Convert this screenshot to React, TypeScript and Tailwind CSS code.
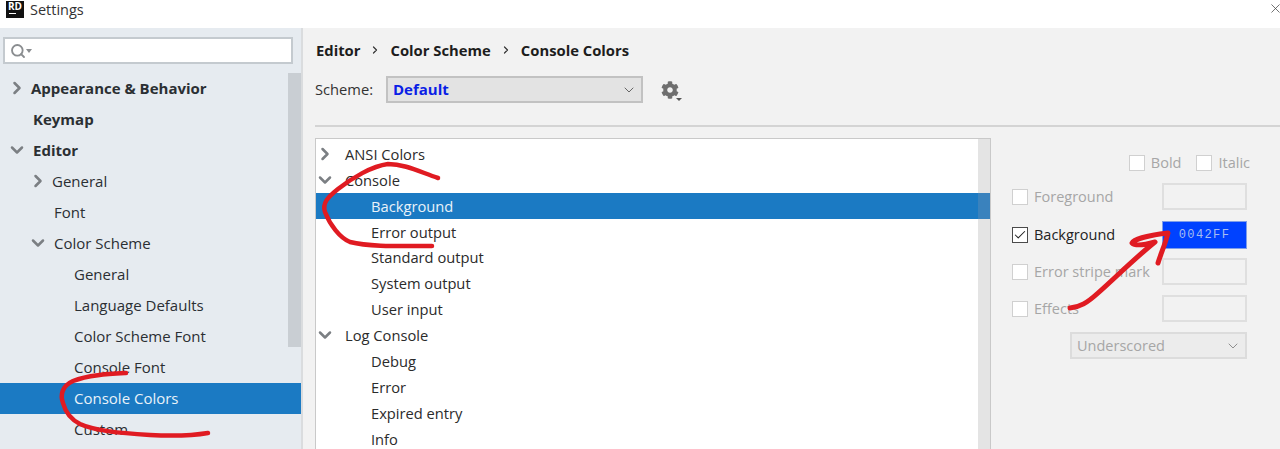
import { ChevronRight, ChevronDown, Search, Check, X } from "lucide-react";
import { FaCog } from "react-icons/fa";

const FONT = "font-['Open_Sans','Noto_Sans',sans-serif]";

type SideItem = { label: string; indent: string; arrow?: "r" | "d"; bold?: boolean; sel?: boolean };
const side: SideItem[] = [
  { label: "Appearance & Behavior", indent: "pl-[31px]", arrow: "r", bold: true },
  { label: "Keymap", indent: "pl-[33px]", bold: true },
  { label: "Editor", indent: "pl-[33px]", arrow: "d", bold: true },
  { label: "General", indent: "pl-[52px]", arrow: "r" },
  { label: "Font", indent: "pl-[54px]" },
  { label: "Color Scheme", indent: "pl-[54px]", arrow: "d" },
  { label: "General", indent: "pl-[74px]" },
  { label: "Language Defaults", indent: "pl-[74px]" },
  { label: "Color Scheme Font", indent: "pl-[74px]" },
  { label: "Console Font", indent: "pl-[74px]" },
  { label: "Console Colors", indent: "pl-[74px]", sel: true },
  { label: "Custom", indent: "pl-[74px]" },
];

type TreeItem = { label: string; arrow?: "r" | "d"; child?: boolean; sel?: boolean };
const tree: TreeItem[] = [
  { label: "ANSI Colors", arrow: "r" },
  { label: "Console", arrow: "d" },
  { label: "Background", child: true, sel: true },
  { label: "Error output", child: true },
  { label: "Standard output", child: true },
  { label: "System output", child: true },
  { label: "User input", child: true },
  { label: "Log Console", arrow: "d" },
  { label: "Debug", child: true },
  { label: "Error", child: true },
  { label: "Expired entry", child: true },
  { label: "Info", child: true },
];

function Arrow({ dir, className }: { dir: "r" | "d"; className: string }) {
  const Icon = dir === "r" ? ChevronRight : ChevronDown;
  return <Icon size={20} strokeWidth={3} className={`absolute text-[#7b7f83] ${className}`} />;
}

function Box({ checked }: { checked?: boolean }) {
  return (
    <span
      className={`flex h-4 w-4 shrink-0 items-center justify-center border bg-white ${
        checked ? "border-[#4a4a4a]" : "border-[#d0d0d0]"
      }`}
    >
      {checked && <Check size={14} strokeWidth={1.8} className="text-[#222222]" />}
    </span>
  );
}

function AttrRow({ label, checked, children, className }: { label: string; checked?: boolean; children?: React.ReactNode; className: string }) {
  return (
    <div className={`flex h-[27px] items-center ${className}`}>
      <Box checked={checked} />
      <span className={`ml-[6px] whitespace-nowrap text-[14.5px] ${checked ? "text-[#222222]" : "text-[#a6a6a6]"}`}>{label}</span>
      <div className="ml-auto">{children}</div>
    </div>
  );
}

const EmptyField = () => <div className="h-[27px] w-[85px] border-2 border-[#dfdfdf] bg-[#f2f2f2]" />;

export default function App() {
  return (
    <div className={`relative flex h-[449px] w-[1280px] flex-col overflow-hidden bg-white ${FONT}`}>
      <header className="flex h-[28px] shrink-0 items-start bg-white pl-[6px]">
        <div className="mt-[1px] flex h-[17px] w-[18px] flex-col items-start bg-[#111111] pl-[2px]">
          <span className="text-[10px] font-bold leading-[11px] text-white">RD</span>
          <span className="ml-[1px] mt-[1px] h-[1px] w-[7px] bg-white" />
        </div>
        <span className="ml-[6px] text-[14.5px] leading-[20px] text-[#333333]">Settings</span>
        <X size={15} strokeWidth={1.2} className="ml-auto mr-[-3px] mt-[1px] text-[#444444]" />
      </header>

      <div className="flex min-h-0 flex-1">
        <aside className="relative w-[301px] shrink-0 overflow-hidden bg-[#e6ebf0]">
          <div className="flex h-[27px] ml-[3px] mt-[9px] w-[290px] items-center border-2 border-[#c4cacf] bg-white pl-[5px]">
            <Search size={16} strokeWidth={2.8} className="text-[#8a8d90]" />
            <span className="h-0 w-0 border-x-[3px] border-t-[4px] border-x-transparent border-t-[#8a8d90]" />
          </div>
          <div className="absolute right-0 top-[45px] h-[274px] w-[13px] bg-[#c9ced3]" />
          <div className="relative mt-[9px]">
            {side.map((it) => (
              <div
                key={it.label + it.indent}
                className={`relative flex h-[31px] items-center whitespace-nowrap pb-[1px] text-[15px] ${it.indent} ${
                  it.sel ? "bg-[#1b7ac3] text-[#e9f2f9]" : "text-[#2b2f33]"
                } ${it.bold ? "font-bold text-[#1d2125]" : ""}`}
              >
                {it.arrow && <Arrow dir={it.arrow} className={it.indent === "pl-[31px]" || it.indent === "pl-[33px]" ? "left-[7px]" : "left-[28px]"} />}
                {it.label}
              </div>
            ))}
          </div>
        </aside>

        <main className="flex min-w-0 flex-1 flex-col border-l-2 border-[#dadcde] bg-[#f2f2f2]">
          <div className="flex h-[48px] shrink-0 items-center pb-[4px] pl-[13px] text-[14.8px] font-bold text-[#1d1d1d]">
            <span>Editor</span>
            <ChevronRight size={12} strokeWidth={2.4} className="mx-[9px] text-[#333333]" />
            <span>Color Scheme</span>
            <ChevronRight size={12} strokeWidth={2.4} className="mx-[9px] text-[#333333]" />
            <span>Console Colors</span>
          </div>
          <div className="flex h-[27px] shrink-0 items-center pl-[12px]">
            <span className="w-[71px] text-[14.7px] text-[#333333]">Scheme:</span>
            <div className="flex h-[27px] w-[257px] items-center justify-between border-2 border-[#c2c2c2] bg-[#e3e3e3] pl-[5px] pr-[4px]">
              <span className="text-[15px] font-bold text-[#0a1ee6]">Default</span>
              <ChevronDown size={16} strokeWidth={1.5} className="text-[#666666]" />
            </div>
            <span className="relative ml-[18px]">
              <FaCog size={18} className="text-[#6f6f6f]" />
              <span className="absolute bottom-[-2px] right-[-3px] h-0 w-0 border-x-[3px] border-t-[3px] border-x-transparent border-t-[#555555]" />
            </span>
          </div>
          <div className="ml-[12px] mt-[22px] h-[2px] shrink-0 bg-[#d4d4d4]" />
          <div className="flex min-h-0 flex-1 pl-[12px] pt-[11px]">
            <div className="relative flex h-[340px] w-[676px] shrink-0 border border-[#c9c9c9] bg-white">
              <div className="min-w-0 flex-1 pt-[2px]">
                {tree.map((it) => (
                  <div
                    key={it.label}
                    className={`relative flex h-[25.9px] items-center whitespace-nowrap text-[14.7px] ${
                      it.child ? "pl-[55px]" : "pl-[29px]"
                    } ${it.sel ? "bg-[#1b7ac3] text-[#e9f2f9]" : "text-[#2b2b2b]"}`}
                  >
                    {it.arrow && <Arrow dir={it.arrow} className="left-[-1px]" />}
                    {it.label}
                  </div>
                ))}
              </div>
              <div className="relative w-[12px] shrink-0 bg-[#e4e4e4]">
                <div className="absolute left-0 top-[54px] h-[26px] w-full bg-[#3a82bd]" />
              </div>
            </div>

            <div className="flex w-[256px] shrink-0 flex-col pl-[21px] pt-[17px]">
              <div className="flex h-4 items-center justify-end gap-[6px] text-[14.5px] text-[#a6a6a6]">
                <Box />
                <span className="mr-[9px]">Bold</span>
                <Box />
                <span className="mr-[-3px]">Italic</span>
              </div>
              <AttrRow label="Foreground" className="mt-[12px]"><EmptyField /></AttrRow>
              <AttrRow label="Background" checked className="mt-[11px]">
                <div className="flex h-[28px] w-[85px] items-center justify-center border border-[#7f9ee8] bg-[#0042ff] font-['Liberation_Mono',monospace] text-[12px] tracking-[1.4px] text-[#a8bcf0]">
                  0042FF
                </div>
              </AttrRow>
              <AttrRow label="Error stripe mark" className="mt-[10px]"><EmptyField /></AttrRow>
              <AttrRow label="Effects" className="mt-[10px]"><EmptyField /></AttrRow>
              <div className="ml-[58px] mt-[10px] flex h-[27px] items-center justify-between border-2 border-[#dcdcdc] bg-[#ececec] pl-[5px] pr-[4px] pt-[1px] text-[14.5px] text-[#a6a6a6]">
                <span>Underscored</span>
                <ChevronDown size={16} strokeWidth={1.5} className="text-[#8e8e8e]" />
              </div>
            </div>
          </div>
        </main>
      </div>

      <svg className="pointer-events-none absolute left-0 top-0" width="1280" height="449" fill="none" stroke="#e01b22" strokeLinecap="round" strokeLinejoin="round" strokeWidth="4.5">
        <path d="M126 373 C108 374 88 375 73 381 C62 386 60 395 63 403 C66 414 72 420 80 424 C95 431 120 433 150 435 C170 436 190 436 208 433" />
        <path d="M438 178 C420 172 405 164 388 164 C372 166 352 178 338 189 C328 197 322 203 325 212 C330 225 340 238 350 242 C370 247 400 246 432 246" />
        <path d="M1070 308 C1080 307 1087 303 1098 293 C1115 278 1135 258 1155 242 C1148 244 1136 247 1132 243 C1134 239 1150 235 1168 233 C1165 245 1161 253 1158 263" strokeWidth="5" />
      </svg>
    </div>
  );
}
